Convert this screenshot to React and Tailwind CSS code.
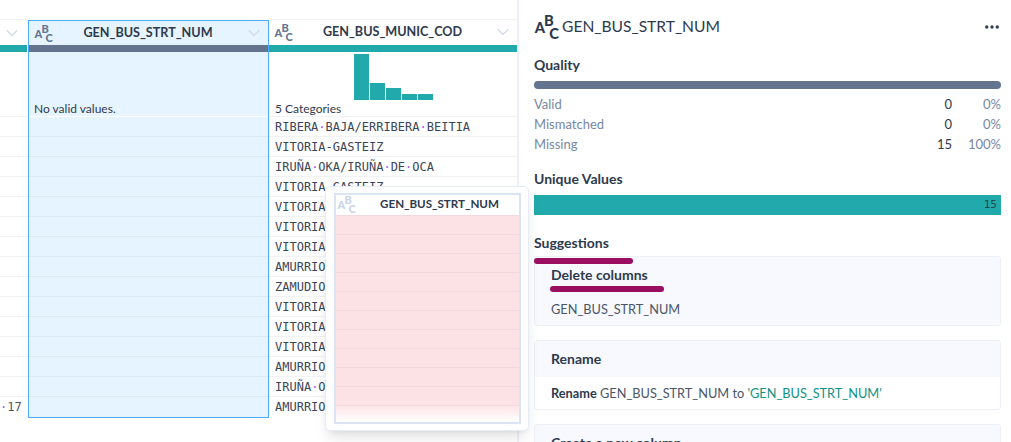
import React from "react";
import { ChevronDown, Ellipsis } from "lucide-react";

const rows = [
  "RIBERA BAJA/ERRIBERA BEITIA",
  "VITORIA-GASTEIZ",
  "IRUÑA OKA/IRUÑA DE OCA",
  "VITORIA-GASTEIZ",
  "VITORIA-GASTEIZ",
  "VITORIA-GASTEIZ",
  "VITORIA-GASTEIZ",
  "AMURRIO",
  "ZAMUDIO",
  "VITORIA-GASTEIZ",
  "VITORIA-GASTEIZ",
  "VITORIA-GASTEIZ",
  "AMURRIO",
  "IRUÑA OKA/IRUÑA DE OCA",
  "AMURRIO",
];

const bars = [46, 17, 12, 6, 6];
const quality = [
  { label: "Valid", count: "0", pct: "0%" },
  { label: "Mismatched", count: "0", pct: "0%" },
  { label: "Missing", count: "15", pct: "100%" },
];

// letters of the type icon, kept as real text
function AbcIcon({ className = "", fill = "#64748f" }) {
  return (
    <svg viewBox="0 0 18 18" className={`overflow-visible ${className}`} fill={fill} fontFamily="Lato, sans-serif" fontWeight="900" fontSize="11">
      <text x="0.5" y="13">A</text>
      <text x="7.5" y="7.5">B</text>
      <text x="11.5" y="17">C</text>
    </svg>
  );
}

// spaces are shown as small purple dots
function Spaced({ text }) {
  const parts = text.split(" ");
  return parts.map((part, i) => (
    <React.Fragment key={i}>
      {part}
      {i < parts.length - 1 && <span className="text-[#a855f7]">·</span>}
    </React.Fragment>
  ));
}

function ColumnHead({ title }) {
  return (
    <div className="flex items-center h-[24px] pl-[5px] pr-[4px]">
      <AbcIcon className="w-[18px] h-[18px] shrink-0 mt-[2px]" />
      <div className="flex-1 text-center text-[12.6px] font-bold text-[#2e3a4d]">{title}</div>
      <ChevronDown size={20} strokeWidth={1.5} className="text-[#d5dbe8] shrink-0" />
    </div>
  );
}

function Card({ title, plain, children }) {
  return (
    <div className={`border border-[#edf0f8] rounded-[3px] mb-[14px] ${plain ? "bg-white" : "bg-[#f7f9fe]"}`}>
      <div className="bg-[#f7f9fe] h-[36px] pl-[16px] pb-[2px] flex items-center text-[14px] font-bold text-[#2e3a4d]">{title}</div>
      <div className="h-[32px] pl-[16px] pt-[6px] text-[12.75px] leading-[20px] text-[#4a5568]">{children}</div>
    </div>
  );
}

export default function App() {
  return (
    <div className="relative flex w-[1011px] h-[442px] overflow-hidden bg-white font-['Lato',sans-serif] text-[#2e3a4d]">
      {/* Table */}
      <div className="flex w-[519px] pt-[19px] border-r-2 border-[#eef0f7] shrink-0">
        <div className="w-[28px] shrink-0 border-t border-[#f0f2f6]">
          <div className="flex justify-end h-[25px] items-center pr-[6px]">
            <ChevronDown size={20} strokeWidth={1.5} className="text-[#d5dbe8]" />
          </div>
          <div className="h-[7px] bg-[#22a9ab] mr-px" />
          <div className="h-[65px] border-b border-[#f0f2f6]" />
          {rows.map((_, i) => (
            <div
              key={i}
              className="h-[20px] border-b border-[#f0f2f6] last:border-b-0 text-right pr-[7px] font-['DejaVu_Sans_Mono',monospace] text-[12px] leading-[20px] text-[#4a5568]"
            >
              {i === 14 && <Spaced text=" 17" />}
            </div>
          ))}
        </div>

        <div className="w-[241px] shrink-0 h-[398px] mt-px border border-[#4dabff] bg-[#e6f4ff]">
          <ColumnHead title="GEN_BUS_STRT_NUM" />
          <div className="h-[7px] bg-[#64748f]" />
          <div className="h-[65px] flex items-end pl-[5px] text-[12px] leading-[14px] border-b border-white">No valid values.</div>
          {rows.map((_, i) => (
            <div key={i} className="h-[20px] last:h-[19px] border-b border-[#dceaf5] last:border-b-0" />
          ))}
        </div>

        <div className="flex-1 min-w-0 border-t border-[#f0f2f6]">
          <ColumnHead title="GEN_BUS_MUNIC_COD" />
          <div className="h-[7px] bg-[#22a9ab] mt-px" />
          <div className="h-[65px] border-b border-[#f0f2f6] pl-[6px]">
            <div className="flex items-end gap-px h-[48px] pl-[79px]">
              {bars.map((h, i) => (
                <div key={i} className="w-[15px] bg-[#22a9ab]" style={{ height: h }} />
              ))}
            </div>
            <div className="text-[12px] leading-[16px] mt-px">5 Categories</div>
          </div>
          {rows.map((row, i) => (
            <div
              key={i}
              className="h-[20px] border-b border-[#f0f2f6] last:border-b-0 pl-[6px] font-['DejaVu_Sans_Mono',monospace] text-[12px] leading-[20px] text-[#3a4558] whitespace-nowrap"
            >
              <Spaced text={row} />
            </div>
          ))}
        </div>
      </div>

      {/* Side panel */}
      <div className="flex-1 min-w-0 pl-[15px] pr-[10px]">
        <div className="flex items-center h-[24px] mt-[15px]">
          <AbcIcon className="w-[24px] h-[24px] shrink-0 mr-[4px] mt-[1px]" fill="#2e3a4d" />
          <div className="flex-1 text-[15.6px] text-[#2e3a4d]">GEN_BUS_STRT_NUM</div>
          <Ellipsis size={18} strokeWidth={2.5} className="text-[#2e3a4d]" />
        </div>

        <div className="text-[14px] font-bold mt-[16px] leading-[20px]">Quality</div>
        <div className="h-[8px] rounded-full bg-[#64748f] mt-[6px]" />
        <div className="mt-[6px]">
          {quality.map((q) => (
            <div key={q.label} className="flex h-[20px] items-center text-[13px]">
              <div className="flex-1 text-[#7687a3]">{q.label}</div>
              <div className="w-[30px] text-right text-[#2e3a4d]">{q.count}</div>
              <div className="w-[49px] text-right text-[#7687a3]">{q.pct}</div>
            </div>
          ))}
        </div>

        <div className="text-[14px] font-bold mt-[14px] leading-[20px]">Unique Values</div>
        <div className="h-[20px] bg-[#22a9ab] mt-[6px] pr-[4px] text-right font-['DejaVu_Sans_Mono',monospace] text-[11px] leading-[20px] text-[#1d4a52]">15</div>

        <div className="text-[14px] font-bold mt-[18px] mb-[3px] leading-[20px]">Suggestions</div>
        <Card title="Delete columns">GEN_BUS_STRT_NUM</Card>
        <Card title="Rename" plain>
          <span className="font-bold text-[#2e3a4d]">Rename</span> GEN_BUS_STRT_NUM to <span className="text-[#0e9384]">'GEN_BUS_STRT_NUM'</span>
        </Card>
        <Card title="Create a new column" plain />
      </div>

      {/* Floating drag preview */}
      <div className="absolute left-[325px] top-[186px] w-[204px] h-[245px] bg-white rounded-[5px] border border-[#e6ebf4] shadow-lg pl-[8px] pr-[7px] pt-[6px] pb-[6px]">
        <div className="relative h-full border-2 border-[#dbe4f3] overflow-hidden">
          <div className="flex items-center h-[20px] bg-white pl-[1px]">
            <AbcIcon className="w-[18px] h-[18px] shrink-0" fill="#c9d4e6" />
            <div className="flex-1 text-center text-[11.6px] font-bold text-[#2e3a4d] mb-[2px] pl-[5px]">GEN_BUS_STRT_NUM</div>
          </div>
          {rows.map((_, i) => (
            <div key={i} className="h-[19px] bg-[#fde2e5] border-t border-[#f3d8de]" />
          ))}
          <div className="absolute inset-x-0 bottom-0 h-[18px] bg-gradient-to-b from-transparent to-white" />
        </div>
      </div>

      {/* Hand drawn underlines */}
      <div className="absolute left-[534px] top-[258px] w-[99px] h-[6px] rounded-full bg-[#9b0f63] blur-[0.5px]" />
      <div className="absolute left-[550px] top-[286px] w-[114px] h-[6px] rounded-full bg-[#9b0f63] blur-[0.5px]" />
    </div>
  );
}
